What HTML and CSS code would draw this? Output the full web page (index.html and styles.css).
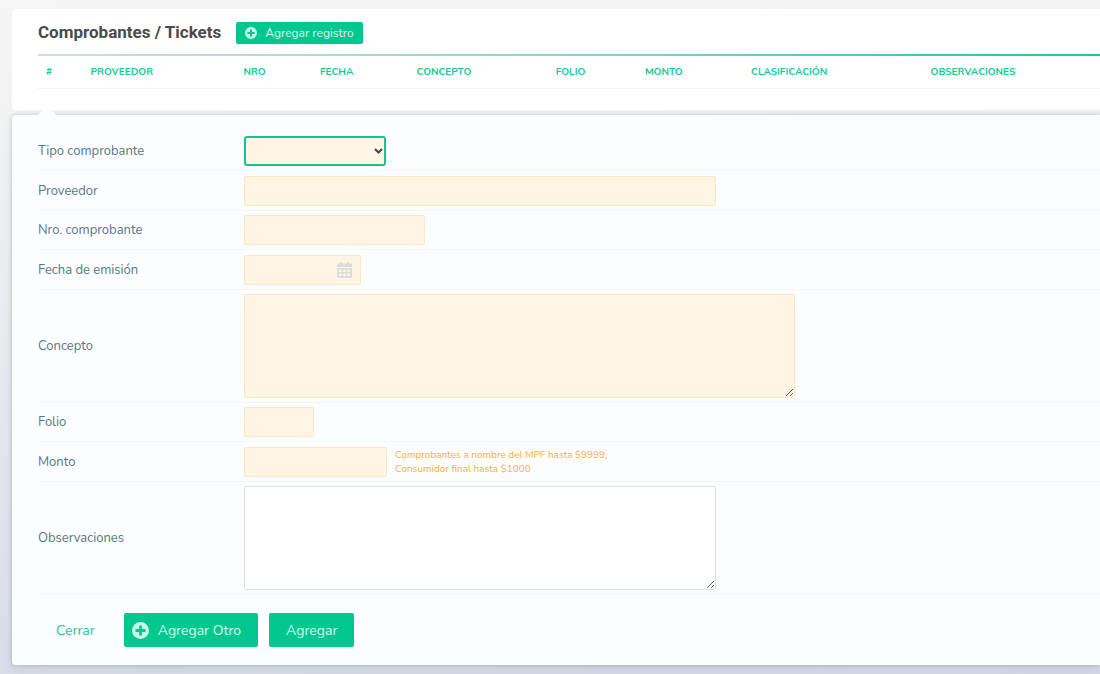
FILE: index.html
```html
<!DOCTYPE html>
<html lang="es">
<head>
<meta charset="utf-8">
<title>Comprobantes / Tickets</title>
<link rel="stylesheet" href="styles.css">
</head>
<body>
<main class="page">
  <section class="card">
    <header class="card-head">
      <h1 class="title">Comprobantes / Tickets</h1>
      <button type="button" class="btn btn-small">
        <svg class="plus plus-small" viewBox="0 0 16 16" aria-hidden="true"><path fill-rule="evenodd" d="M8 0a8 8 0 1 0 0 16A8 8 0 0 0 8 0zM6.7 3.3h2.6v3.4h3.4v2.6H9.3v3.4H6.7V9.3H3.3V6.7h3.4z"/></svg>
        Agregar registro
      </button>
    </header>
    <table class="records">
      <thead>
        <tr>
          <th class="c-num">#</th>
          <th class="c-prov">PROVEEDOR</th>
          <th class="c-nro">NRO</th>
          <th class="c-fecha">FECHA</th>
          <th class="c-concepto">CONCEPTO</th>
          <th class="c-folio">FOLIO</th>
          <th class="c-monto">MONTO</th>
          <th class="c-clasif">CLASIFICACIÓN</th>
          <th>OBSERVACIONES</th>
        </tr>
      </thead>
    </table>
  </section>

  <form class="panel">
    <div class="row">
      <label for="tipo">Tipo comprobante</label>
      <div class="select-wrap">
        <select id="tipo" class="field required focused"><option></option></select>
        <svg class="chevron" viewBox="0 0 9 6" aria-hidden="true"><path d="M1 1l3.5 3.5L8 1"/></svg>
      </div>
    </div>
    <div class="row">
      <label for="proveedor">Proveedor</label>
      <input id="proveedor" class="field required w-prov" type="text">
    </div>
    <div class="row row-snug">
      <label for="nro">Nro. comprobante</label>
      <input id="nro" class="field required w-nro" type="text">
    </div>
    <div class="row">
      <label for="fecha">Fecha de emisión</label>
      <div class="date-wrap">
        <input id="fecha" class="field required" type="text">
        <svg class="calendar" viewBox="0 0 15 16" aria-hidden="true"><path fill-rule="evenodd" d="M3 0h2v1.5h5V0h2v1.5h1.5A1.5 1.5 0 0 1 15 3v2H0V3a1.5 1.5 0 0 1 1.5-1.5H3zM0 6h15v8.5a1.5 1.5 0 0 1-1.5 1.5h-12A1.5 1.5 0 0 1 0 14.500zM2 7.500v2.500h2.700V7.500zM6.100 7.500v2.500h2.800V7.500zM10.300 7.500v2.500H13V7.500zM2 11.500v2.500h2.700v-2.500zM6.100 11.500v2.500h2.800v-2.500zM10.300 11.500v2.500H13v-2.500z"/></svg>
      </div>
    </div>
    <div class="row row-snug">
      <label for="concepto">Concepto</label>
      <textarea id="concepto" class="field area required w-concepto"></textarea>
    </div>
    <div class="row row-snug">
      <label for="folio">Folio</label>
      <input id="folio" class="field required w-folio" type="text">
    </div>
    <div class="row">
      <label for="monto">Monto</label>
      <div class="with-hint">
        <input id="monto" class="field required w-monto" type="text" aria-describedby="monto-hint">
        <p id="monto-hint" class="hint">Comprobantes a nombre del MPF hasta $9999,<br>Consumidor final hasta $1000</p>
      </div>
    </div>
    <div class="row row-snug">
      <label for="obs">Observaciones</label>
      <textarea id="obs" class="field area w-prov"></textarea>
    </div>
    <footer class="actions">
      <button type="button" class="btn btn-link">Cerrar</button>
      <button type="button" class="btn btn-icon">
        <svg class="plus" viewBox="0 0 16 16" aria-hidden="true"><path fill-rule="evenodd" d="M8 0a8 8 0 1 0 0 16A8 8 0 0 0 8 0zM6.7 3.3h2.6v3.4h3.4v2.6H9.3v3.4H6.7V9.3H3.3V6.7h3.4z"/></svg>
        Agregar Otro
      </button>
      <button type="submit" class="btn">Agregar</button>
    </footer>
  </form>
</main>
</body>
</html>
```
FILE: styles.css
```css
* {
  box-sizing: border-box;
}

body {
  margin: 0;
  min-height: 100vh;
  background: linear-gradient(175deg, #f5f5f5 0%, #eeeff1 30%, #d3dae6 100%);
  color: #5a7684;
  font-family: Nunito, Lato, "Open Sans", sans-serif;
  font-size: 13px;
}

.page {
  display: flex;
  flex-direction: column;
  gap: 5px;
  padding: 9px 0 9px 12px;
}

.card {
  padding: 11px 0 21px 26px;
  border-radius: 4px 0 0 4px;
  background: #fff;
}

.card-head {
  display: flex;
  align-items: center;
  gap: 15px;
  padding-bottom: 10px;
}

.title {
  margin: 0;
  color: #4a4a4a;
  font: bold 17px/24px Roboto, sans-serif;
}

.btn {
  display: flex;
  align-items: center;
  justify-content: center;
  height: 34px;
  padding: 0 17px;
  border: 0;
  border-radius: 2px;
  background: #02c88f;
  color: #d9f7ee;
  font-family: inherit;
  font-size: 14px;
}

.btn-small {
  gap: 8px;
  height: 22px;
  margin-top: 2px;
  padding: 0 9px;
  font-size: 12px;
}

.btn-icon {
  gap: 9px;
  padding-left: 8px;
}

.btn-link {
  padding: 0 18px;
  background: none;
  color: #1fc997;
}

.plus {
  width: 17px;
  height: 17px;
  fill: #cdf4e8;
}

.plus-small {
  width: 12px;
  height: 12px;
}

.records {
  width: 100%;
  border-top: 2px solid;
  border-image: linear-gradient(90deg, #d3daea, #8fd9c6 45%, #2cc095) 1;
  border-spacing: 0;
  table-layout: fixed;
}

.records th {
  height: 33px;
  padding: 0 8px 1px;
  border-bottom: 1px solid #f4f5f6;
  color: #12cb95;
  font-size: 10px;
  font-weight: bold;
  text-align: left;
}

.c-num { width: 4.2%; }
.c-prov { width: 14.4%; }
.c-nro { width: 7.2%; }
.c-fecha { width: 9.1%; }
.c-concepto { width: 13.1%; }
.c-folio { width: 8.4%; }
.c-monto { width: 10%; }
.c-clasif { width: 16.9%; }

.panel {
  position: relative;
  padding: 16px 0 18px 26px;
  border-radius: 4px 0 0 4px;
  background: #fcfdff;
  box-shadow: 0 0 4px rgba(0, 0, 0, 0.18), 0 6px 14px rgba(0, 0, 0, 0.06);
}

/* Notch that points at the open record */
.panel::before {
  content: "";
  position: absolute;
  top: -9px;
  left: 26px;
  border: 9px solid transparent;
  border-top: 0;
  border-bottom-color: #fcfdff;
}

.row {
  display: grid;
  grid-template-columns: 206px 1fr;
  align-items: center;
  justify-items: start;
  padding: 5px 0 4px;
  border-bottom: 1px solid #f4f6f8;
}

.row-snug {
  padding: 4px 0;
}

.field {
  display: block;
  height: 30px;
  padding: 4px 8px;
  border: 1px solid #d9e0ea;
  border-radius: 2px;
  background: #fff;
  color: #4a4a4a;
  font-family: inherit;
  font-size: 13px;
}

.required {
  border-color: #ffe8bd;
  background: #fff5e4;
}

.focused {
  width: 142px;
  border: 2px solid #10c792;
  border-radius: 3px;
  appearance: none;
}

.area {
  height: 104px;
  resize: both;
}

.w-prov { width: 472px; }
.w-nro { width: 181px; }
.w-concepto { width: 551px; }
.w-folio { width: 70px; }
.w-monto { width: 143px; }

.select-wrap,
.date-wrap {
  position: relative;
}

.date-wrap .field {
  width: 117px;
}

.chevron {
  position: absolute;
  top: 12px;
  right: 3px;
  width: 9px;
  height: 6px;
  fill: none;
  stroke: #444;
  stroke-width: 2;
  pointer-events: none;
}

.calendar {
  position: absolute;
  top: 7px;
  right: 9px;
  width: 15px;
  height: 16px;
  fill: #dcdcdc;
}

.with-hint {
  display: flex;
  align-items: center;
  gap: 8px;
}

.hint {
  margin: 0;
  color: #ffb02e;
  font-size: 10px;
  line-height: 14px;
}

.actions {
  display: flex;
  gap: 11px;
  padding-top: 18px;
}
```
